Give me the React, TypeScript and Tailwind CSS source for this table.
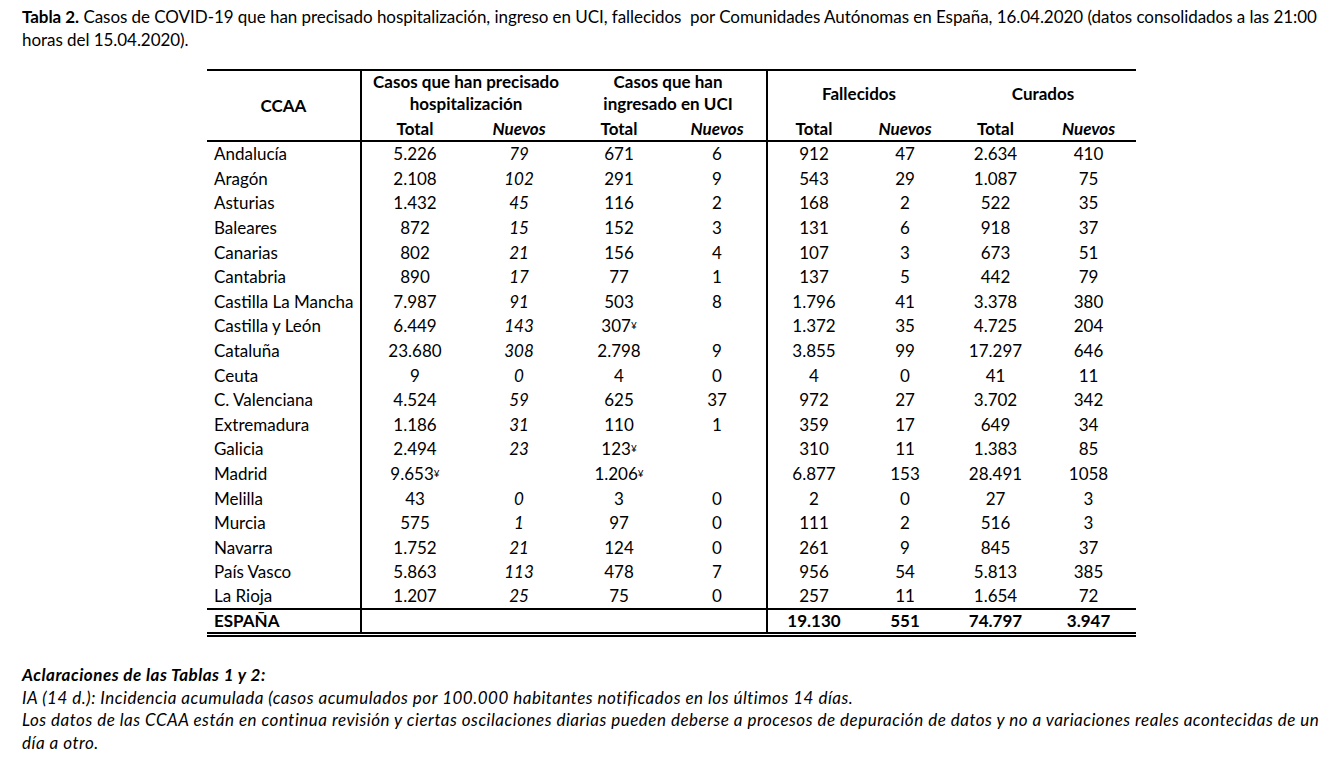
const rows: [string, string, string, string, string, string, string, string, string][] = [
  ['Andalucía', '5.226', '79', '671', '6', '912', '47', '2.634', '410'],
  ['Aragón', '2.108', '102', '291', '9', '543', '29', '1.087', '75'],
  ['Asturias', '1.432', '45', '116', '2', '168', '2', '522', '35'],
  ['Baleares', '872', '15', '152', '3', '131', '6', '918', '37'],
  ['Canarias', '802', '21', '156', '4', '107', '3', '673', '51'],
  ['Cantabria', '890', '17', '77', '1', '137', '5', '442', '79'],
  ['Castilla La Mancha', '7.987', '91', '503', '8', '1.796', '41', '3.378', '380'],
  ['Castilla y León', '6.449', '143', '307¥', '', '1.372', '35', '4.725', '204'],
  ['Cataluña', '23.680', '308', '2.798', '9', '3.855', '99', '17.297', '646'],
  ['Ceuta', '9', '0', '4', '0', '4', '0', '41', '11'],
  ['C. Valenciana', '4.524', '59', '625', '37', '972', '27', '3.702', '342'],
  ['Extremadura', '1.186', '31', '110', '1', '359', '17', '649', '34'],
  ['Galicia', '2.494', '23', '123¥', '', '310', '11', '1.383', '85'],
  ['Madrid', '9.653¥', '', '1.206¥', '', '6.877', '153', '28.491', '1058'],
  ['Melilla', '43', '0', '3', '0', '2', '0', '27', '3'],
  ['Murcia', '575', '1', '97', '0', '111', '2', '516', '3'],
  ['Navarra', '1.752', '21', '124', '0', '261', '9', '845', '37'],
  ['País Vasco', '5.863', '113', '478', '7', '956', '54', '5.813', '385'],
  ['La Rioja', '1.207', '25', '75', '0', '257', '11', '1.654', '72'],
];

// values ending in ¥ get a small raised mark
function Val({ v }: { v: string }) {
  if (!v.endsWith('¥')) return <>{v}</>;
  return (
    <>
      {v.slice(0, -1)}
      <sup className="relative -top-[3px] text-[10px]">¥</sup>
    </>
  );
}

export default function App() {
  const font = { fontFamily: 'Lato, "Noto Sans", sans-serif' };
  return (
    <div className="min-h-screen bg-white text-black" style={font}>
      <p className="whitespace-nowrap px-[22px] pt-[5px] text-[17px] leading-[23px] tracking-[-0.05px]">
        <b>Tabla 2.</b> Casos de COVID-19 que han precisado hospitalización, ingreso en UCI, fallecidos&nbsp; por
        Comunidades Autónomas en España, 16.04.2020 (datos consolidados a las 21:00
        <br />
        horas del 15.04.2020).
      </p>

      <table className="ml-[207px] mt-[18px] w-[929px] table-fixed border-collapse text-[17px]">
        <colgroup>
          <col className="w-[154px]" />
          <col className="w-[107px]" />
          <col className="w-[102px]" />
          <col className="w-[98px]" />
          <col className="w-[99px]" />
          <col className="w-[93px]" />
          <col className="w-[90px]" />
          <col className="w-[91px]" />
          <col className="w-[95px]" />
        </colgroup>
        <thead className="font-bold">
          <tr className="h-[47px] border-t-2 border-black leading-[22px]">
            <td rowSpan={2} className="border-r-2 border-black text-center align-middle">
              CCAA
            </td>
            <td colSpan={2} className="text-center align-top">
              Casos que han precisado
              <br />
              hospitalización
            </td>
            <td colSpan={2} className="border-r-2 border-black text-center align-top">
              Casos que han
              <br />
              ingresado en UCI
            </td>
            <td colSpan={2} className="text-center align-middle">
              Fallecidos
            </td>
            <td colSpan={2} className="text-center align-middle">
              Curados
            </td>
          </tr>
          <tr className="h-[24px] border-b-2 border-black leading-[22px]">
            <td className="text-center">Total</td>
            <td className="text-center italic">Nuevos</td>
            <td className="text-center">Total</td>
            <td className="border-r-2 border-black text-center italic">Nuevos</td>
            <td className="text-center">Total</td>
            <td className="text-center italic">Nuevos</td>
            <td className="text-center">Total</td>
            <td className="text-center italic">Nuevos</td>
          </tr>
        </thead>
        <tbody className="leading-[22px]">
          {rows.map((r, i) => (
            <tr key={r[0]} className={i === 0 ? 'h-[25.5px] align-middle' : 'h-[24.6px] align-middle'}>
              <td className="border-r-2 border-black pl-[7px]">{r[0]}</td>
              <td className="text-center">
                <Val v={r[1]} />
              </td>
              <td className="text-center italic">{r[2]}</td>
              <td className="text-center">
                <Val v={r[3]} />
              </td>
              <td className="border-r-2 border-black text-center">{r[4]}</td>
              <td className="text-center">{r[5]}</td>
              <td className="text-center">{r[6]}</td>
              <td className="text-center">{r[7]}</td>
              <td className="text-center">{r[8]}</td>
            </tr>
          ))}
          <tr className="h-[25px] border-t-2 border-b-[5px] border-double border-black font-bold">
            <td className="border-r-2 border-solid border-black pl-[7px]">ESPAÑA</td>
            <td colSpan={4} className="border-r-2 border-solid border-black"></td>
            <td className="text-center">19.130</td>
            <td className="text-center">551</td>
            <td className="text-center">74.797</td>
            <td className="text-center">3.947</td>
          </tr>
        </tbody>
      </table>

      <div className="mt-[27px] whitespace-nowrap px-[22px] text-[17px] italic leading-[22.5px] tracking-[0.5px]">
        <p className="font-bold">Aclaraciones de las Tablas 1 y 2:</p>
        <p>IA (14 d.): Incidencia acumulada (casos acumulados por 100.000 habitantes notificados en los últimos 14 días.</p>
        <p>
          Los datos de las CCAA están en continua revisión y ciertas oscilaciones diarias pueden deberse a procesos de
          depuración de datos y no a variaciones reales acontecidas de un
          <br />
          día a otro.
        </p>
      </div>
    </div>
  );
}
